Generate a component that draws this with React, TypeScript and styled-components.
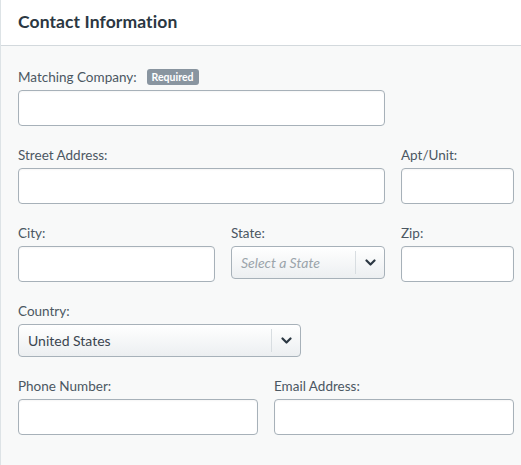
import React from "react";
import styled, { createGlobalStyle } from "styled-components";

const GlobalStyle = createGlobalStyle`
  html, body {
    margin: 0;
    padding: 0;
    background: #f8f9f9;
  }
  body {
    font-family: "Lato", "Liberation Sans", Arial, sans-serif;
  }
`;

const Panel = styled.section`
  width: 521px;
  height: 465px;
  box-sizing: border-box;
  border-left: 1px solid #dde3e6;
  background: #f8f9f9;
`;

const Header = styled.header`
  height: 46px;
  box-sizing: border-box;
  background: #ffffff;
  border-bottom: 1px solid #d3d9dd;
  display: flex;
  align-items: center;
  padding: 0 0 2px 17px;
`;

const Title = styled.h2`
  margin: 0;
  font-size: 17.5px;
  font-weight: 700;
  letter-spacing: 0.1px;
  color: #2b3742;
`;

const Body = styled.div`
  padding: 22px 7px 0 17px;
  display: flex;
  flex-direction: column;
  gap: 20px;
`;

const Row = styled.div<{ $cols: string }>`
  display: grid;
  grid-template-columns: ${(p) => p.$cols};
  column-gap: 16px;
`;

const Field = styled.div<{ $span?: number }>`
  display: flex;
  flex-direction: column;
  grid-column: span ${(p) => p.$span ?? 1};
`;

const Label = styled.label`
  display: flex;
  align-items: center;
  gap: 10px;
  height: 18px;
  margin-bottom: 4px;
  font-size: 13.5px;
  color: #4b5762;
`;

const Badge = styled.span`
  display: inline-block;
  background: #8995a0;
  color: #ffffff;
  font-size: 10.5px;
  font-weight: 700;
  line-height: 16px;
  padding: 0 5px;
  border-radius: 3px;
`;

const TextInput = styled.input<{ $width?: number }>`
  box-sizing: border-box;
  height: 36px;
  width: ${(p) => (p.$width ? `${p.$width}px` : "100%")};
  border: 1px solid #a7b1b9;
  border-radius: 4px;
  background: #ffffff;
  box-shadow: inset 0 1px 2px rgba(0, 0, 0, 0.04);
  font-family: inherit;
  font-size: 13px;
  padding: 0 9px;
  outline: none;
`;

const SelectBox = styled.div<{ $width?: number }>`
  box-sizing: border-box;
  height: 33px;
  width: ${(p) => (p.$width ? `${p.$width}px` : "100%")};
  border: 1px solid #a7b1b9;
  border-radius: 4px;
  background: linear-gradient(#ffffff, #eceff1);
  display: flex;
  align-items: stretch;
`;

const SelectValue = styled.span<{ $placeholder?: boolean }>`
  flex: 1;
  display: flex;
  align-items: center;
  padding-left: 9px;
  font-size: 14px;
  color: ${(p) => (p.$placeholder ? "#9ba4ab" : "#3a4550")};
  font-style: ${(p) => (p.$placeholder ? "italic" : "normal")};
  white-space: nowrap;
  overflow: hidden;
`;

const Caret = styled.span`
  width: 28px;
  margin: 4px 0;
  border-left: 1px solid #d8dde1;
  display: flex;
  align-items: center;
  justify-content: center;
  color: #2b3742;
`;

const Chevron = () => (
  <svg width="11" height="8" viewBox="0 0 11 8" aria-hidden="true">
    <path d="M1.5 1.5 L5.5 5.5 L9.5 1.5" fill="none" stroke="currentColor" strokeWidth="2.2" strokeLinecap="round" strokeLinejoin="round" />
  </svg>
);

const Select: React.FC<{ value: string; placeholder?: boolean; width?: number }> = (props) => (
  <SelectBox $width={props.width}>
    <SelectValue $placeholder={props.placeholder}>{props.value}</SelectValue>
    <Caret>
      <Chevron />
    </Caret>
  </SelectBox>
);

const App: React.FC = () => {
  return (
    <>
      <GlobalStyle />
      <Panel>
        <Header>
          <Title>Contact Information</Title>
        </Header>
        <Body>
          <Row $cols="197px 154px 1fr">
            <Field $span={2}>
              <Label>
                Matching Company: <Badge>Required</Badge>
              </Label>
              <TextInput />
            </Field>
          </Row>
          <Row $cols="197px 154px 1fr">
            <Field $span={2}>
              <Label>Street Address:</Label>
              <TextInput />
            </Field>
            <Field>
              <Label>Apt/Unit:</Label>
              <TextInput />
            </Field>
          </Row>
          <Row $cols="197px 154px 1fr">
            <Field>
              <Label>City:</Label>
              <TextInput />
            </Field>
            <Field>
              <Label>State:</Label>
              <Select value="Select a State" placeholder />
            </Field>
            <Field>
              <Label>Zip:</Label>
              <TextInput />
            </Field>
          </Row>
          <Row $cols="1fr">
            <Field>
              <Label>Country:</Label>
              <Select value="United States" width={283} />
            </Field>
          </Row>
          <Row $cols="1fr 1fr">
            <Field>
              <Label>Phone Number:</Label>
              <TextInput />
            </Field>
            <Field>
              <Label>Email Address:</Label>
              <TextInput />
            </Field>
          </Row>
        </Body>
      </Panel>
    </>
  );
};

export default App;
